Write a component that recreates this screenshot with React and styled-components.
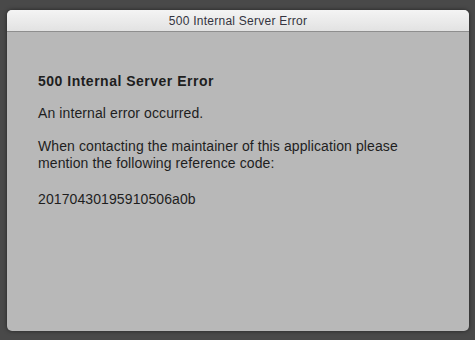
import React from 'react'
import styled, { createGlobalStyle } from 'styled-components'

const GlobalStyle = createGlobalStyle`
  html, body {
    margin: 0;
    padding: 0;
    background: #494949;
    font-family: "Liberation Sans", Arial, sans-serif;
  }
`

const Page = styled.div`
  width: 475px;
  height: 340px;
  box-sizing: border-box;
  padding: 10px 6px 9px 7px;
  background: #494949;
`

const Dialog = styled.div`
  height: 100%;
  display: flex;
  flex-direction: column;
  background: #b8b8b8;
  border-radius: 5px;
  overflow: hidden;
  box-shadow: 0 0 4px rgba(0, 0, 0, 0.5);
`

const TitleBar = styled.div`
  height: 22px;
  box-sizing: border-box;
  flex-shrink: 0;
  display: flex;
  align-items: center;
  justify-content: center;
  padding-top: 1px;
  background: linear-gradient(#f4f4f4, #e2e2e2);
  border-bottom: 1px solid #8e8e8e;
  color: #343440;
  font-size: 12px;
  letter-spacing: 0.25px;
`

const Body = styled.div`
  padding: 41px 31px 0;
  color: #1e1e1e;
  font-size: 14px;
  line-height: 17px;
  letter-spacing: 0.1px;
`

const Heading = styled.h1`
  margin: 0 0 15px;
  font-size: 14px;
  font-weight: bold;
  line-height: 17px;
  letter-spacing: 0.5px;
`

const Text = styled.p`
  margin: 0 0 ${p => p.gap || 16}px;
`

export default function App() {
  return (
    <Page>
      <GlobalStyle />
      <Dialog>
        <TitleBar>500 Internal Server Error</TitleBar>
        <Body>
          <Heading>500 Internal Server Error</Heading>
          <Text>An internal error occurred.</Text>
          <Text gap={19}>
            When contacting the maintainer of this application please mention the following reference code:
          </Text>
          <Text>20170430195910506a0b</Text>
        </Body>
      </Dialog>
    </Page>
  )
}
